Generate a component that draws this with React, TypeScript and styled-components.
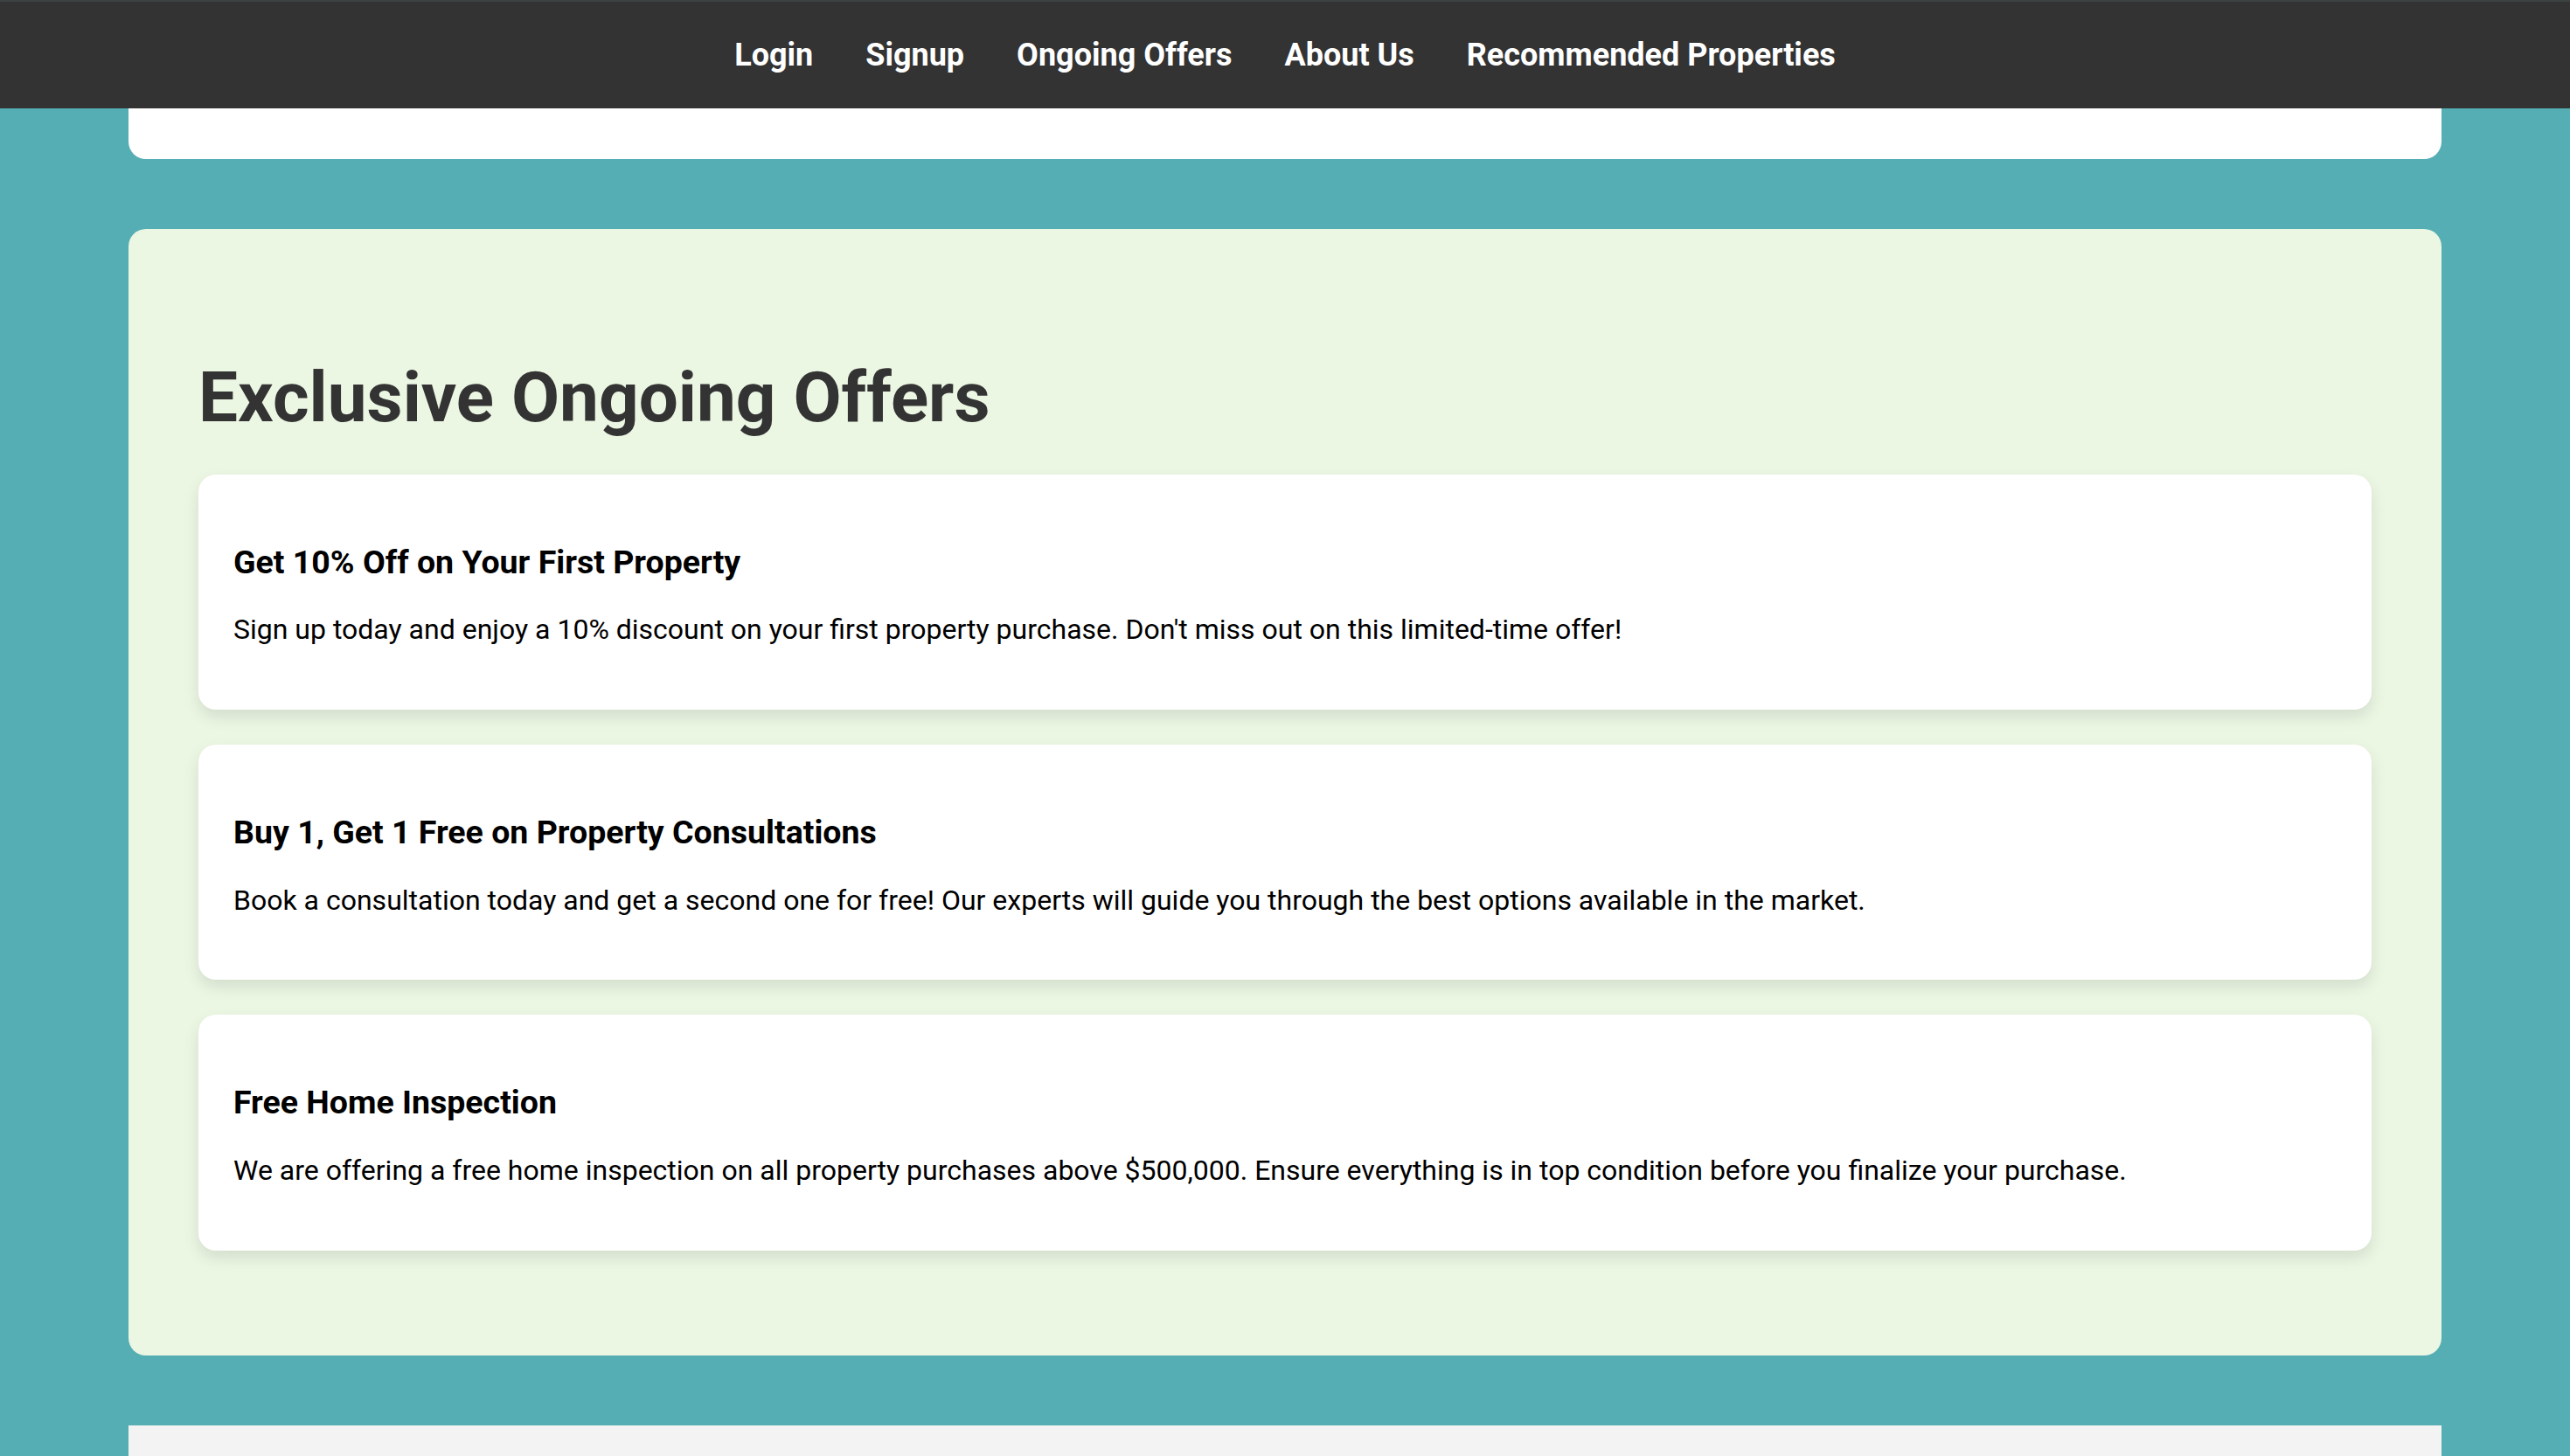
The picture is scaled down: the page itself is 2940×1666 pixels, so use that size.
import React from "react";
import styled, { createGlobalStyle } from "styled-components";

const Global = createGlobalStyle`
  html, body {
    margin: 0;
    padding: 0;
    background: #54aeb4;
    font-family: Roboto, "Liberation Sans", Arial, sans-serif;
  }
  * { box-sizing: border-box; }
`;

const Page = styled.div`
  min-height: 1666px;
  background: #54aeb4;
  overflow: hidden;
`;

const NavBar = styled.nav`
  background: #333333;
  border-top: 2px solid #3c4242;
  height: 124px;
  display: flex;
  justify-content: center;
  align-items: center;
  gap: 60px;
`;

const NavLink = styled.a`
  color: #ffffff;
  font-weight: 700;
  font-size: 36px;
  text-decoration: none;
  cursor: pointer;
`;

const Section = styled.section<{ $bg: string; $tail?: boolean }>`
  width: 90%;
  margin: 0 auto;
  background: ${(p) => p.$bg};
  border-radius: ${(p) => (p.$tail ? "0 0 20px 20px" : "20px")};
`;

const PeekCard = styled(Section)`
  height: 58px;
  margin-bottom: 80px;
`;

const OffersSection = styled(Section)`
  padding: 80px 80px 80px;
  margin-bottom: 80px;
`;

const FooterSection = styled(Section)`
  height: 200px;
  border-radius: 0;
`;

const Heading = styled.h2`
  margin: 67px 0 40px;
  font-size: 80px;
  font-weight: 700;
  color: #333333;
  line-height: 1.17;
`;

const OfferList = styled.div`
  display: flex;
  flex-direction: column;
  gap: 40px;
  margin-bottom: 40px;
`;

const OfferCard = styled.div`
  background: #ffffff;
  border-radius: 20px;
  padding: 40px;
  box-shadow: 0 8px 18px rgba(0, 0, 0, 0.1);
`;

const OfferTitle = styled.h3`
  margin: 39px 0 37px;
  font-size: 37.5px;
  font-weight: 700;
  color: #000000;
  line-height: 1.17;
`;

const OfferText = styled.p`
  margin: 0 0 32px;
  font-size: 32px;
  color: #000000;
  line-height: 1.17;
`;

const offers = [
  {
    title: "Get 10% Off on Your First Property",
    text: "Sign up today and enjoy a 10% discount on your first property purchase. Don't miss out on this limited-time offer!",
  },
  {
    title: "Buy 1, Get 1 Free on Property Consultations",
    text: "Book a consultation today and get a second one for free! Our experts will guide you through the best options available in the market.",
  },
  {
    title: "Free Home Inspection",
    text: "We are offering a free home inspection on all property purchases above $500,000. Ensure everything is in top condition before you finalize your purchase.",
  },
];

export default function App() {
  return (
    <Page>
      <Global />
      <NavBar>
        <NavLink>Login</NavLink>
        <NavLink>Signup</NavLink>
        <NavLink>Ongoing Offers</NavLink>
        <NavLink>About Us</NavLink>
        <NavLink>Recommended Properties</NavLink>
      </NavBar>
      <PeekCard $bg="#ffffff" $tail />
      <OffersSection $bg="#ebf6e3">
        <Heading>Exclusive Ongoing Offers</Heading>
        <OfferList>
          {offers.map((o) => (
            <OfferCard key={o.title}>
              <OfferTitle>{o.title}</OfferTitle>
              <OfferText>{o.text}</OfferText>
            </OfferCard>
          ))}
        </OfferList>
      </OffersSection>
      <FooterSection $bg="#f3f3f3" />
    </Page>
  );
}
